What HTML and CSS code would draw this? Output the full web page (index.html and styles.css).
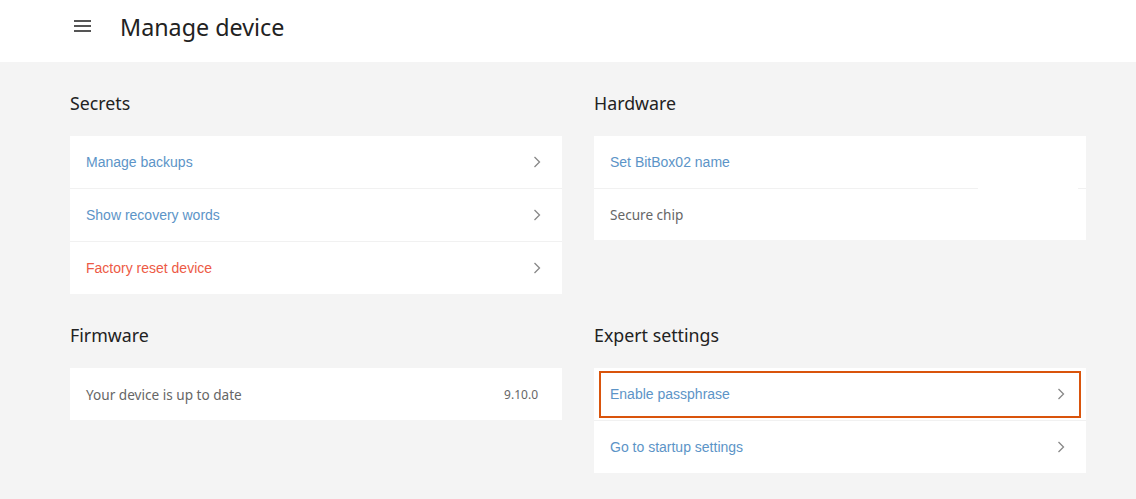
FILE: index.html
```html
<!DOCTYPE html>
<html>
<head>
<meta charset="utf-8">
<link rel="stylesheet" href="styles.css">
</head>
<body>
<header class="header">
  <button class="menu" aria-label="menu">
    <svg width="17" height="14" viewBox="0 0 17 14"><rect x="0" y="1" width="17" height="2" fill="#555"/><rect x="0" y="6" width="17" height="2" fill="#555"/><rect x="0" y="11" width="17" height="2" fill="#555"/></svg>
  </button>
  <h1 class="title">Manage device</h1>
</header>
<main class="content">
  <section class="section">
    <h2 class="heading">Secrets</h2>
    <div class="card">
      <div class="row"><span class="link">Manage backups</span><span class="chev"><svg width="8" height="12" viewBox="0 0 8 12"><path d="M1.5 1 L6.5 6 L1.5 11" fill="none" stroke="#888" stroke-width="1.3"/></svg></span></div>
      <div class="row"><span class="link">Show recovery words</span><span class="chev"><svg width="8" height="12" viewBox="0 0 8 12"><path d="M1.5 1 L6.5 6 L1.5 11" fill="none" stroke="#888" stroke-width="1.3"/></svg></span></div>
      <div class="row"><span class="link danger">Factory reset device</span><span class="chev"><svg width="8" height="12" viewBox="0 0 8 12"><path d="M1.5 1 L6.5 6 L1.5 11" fill="none" stroke="#888" stroke-width="1.3"/></svg></span></div>
    </div>
  </section>
  <section class="section">
    <h2 class="heading">Hardware</h2>
    <div class="card">
      <div class="row gap-sep"><span class="link">Set BitBox02 name</span></div>
      <div class="row short"><span class="plain">Secure chip</span></div>
    </div>
  </section>
  <section class="section">
    <h2 class="heading">Firmware</h2>
    <div class="card">
      <div class="row"><span class="plain">Your device is up to date</span><span class="version">9.10.0</span></div>
    </div>
  </section>
  <section class="section">
    <h2 class="heading">Expert settings</h2>
    <div class="card">
      <div class="row focused"><span class="link">Enable passphrase</span><span class="chev"><svg width="8" height="12" viewBox="0 0 8 12"><path d="M1.5 1 L6.5 6 L1.5 11" fill="none" stroke="#888" stroke-width="1.3"/></svg></span></div>
      <div class="row"><span class="link">Go to startup settings</span><span class="chev"><svg width="8" height="12" viewBox="0 0 8 12"><path d="M1.5 1 L6.5 6 L1.5 11" fill="none" stroke="#888" stroke-width="1.3"/></svg></span></div>
    </div>
  </section>
</main>
</body>
</html>
```
FILE: styles.css
```css
html, body {
  margin: 0;
  padding: 0;
}
body {
  background: #f4f4f4;
  font-family: "Noto Sans", "Open Sans", sans-serif;
  color: #222;
  width: 1136px;
  height: 499px;
  overflow: hidden;
}
.header {
  height: 62px;
  background: #fff;
  display: flex;
  align-items: center;
  padding-left: 74px;
  box-sizing: border-box;
}
.menu {
  border: 0;
  background: none;
  padding: 0;
  width: 17px;
  height: 14px;
  display: flex;
  margin-top: -10px;
}
.title {
  margin: -9px 0 0 29px;
  font-size: 23.3px;
  font-weight: 400;
  color: #222;
}
.content {
  display: grid;
  grid-template-columns: 492px 492px;
  column-gap: 32px;
  padding: 0 0 0 70px;
  grid-template-rows: 232px auto;
}
.section {
  display: flex;
  flex-direction: column;
}
.heading {
  margin: 30px 0 0 0;
  height: 44px;
  font-size: 17.8px;
  font-weight: 400;
  color: #222;
  line-height: 22px;
}
.card {
  background: #fff;
  display: flex;
  flex-direction: column;
}
.row {
  height: 52px;
  display: flex;
  align-items: center;
  justify-content: space-between;
  padding: 0 16px;
  box-sizing: border-box;
  position: relative;
}
.row + .row {
  border-top: 1px solid #f1f1f1;
  height: 53px;
}
.row.short {
  height: 52px;
}
.link {
  font-family: "Liberation Sans", Arial, sans-serif;
  font-size: 14px;
  color: #5c94c7;
}
.danger {
  color: #ed5a45;
}
.plain {
  font-size: 13.6px;
  color: #666;
}
.version {
  font-size: 12px;
  color: #666;
  margin-right: 8px;
}
.chev {
  display: flex;
  margin-right: 5px;
}
.gap-sep::after {
  content: "";
  position: absolute;
  left: 384px;
  right: 8px;
  bottom: -1px;
  height: 1px;
  background: #fff;
  z-index: 1;
}
.focused::before {
  content: "";
  position: absolute;
  left: 5px;
  right: 5px;
  top: 3px;
  bottom: 2px;
  border: 2px solid #d9540c;
}
```
